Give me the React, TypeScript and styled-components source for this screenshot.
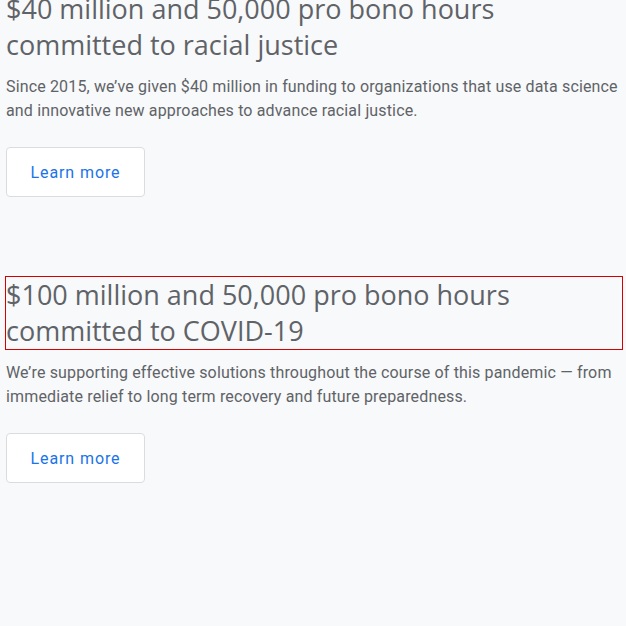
import React from 'react'
import styled, { createGlobalStyle } from 'styled-components'

const GlobalStyle = createGlobalStyle`
  html, body {
    margin: 0;
    padding: 0;
    background: #f8f9fa;
  }
  body {
    font-family: Roboto, "Liberation Sans", Arial, sans-serif;
    -webkit-font-smoothing: antialiased;
  }
`;

const Page = styled.main`
  margin-top: -9px;
  padding: 0 4px 0 6px;
`;

const Section = styled.section`
  padding-bottom: 80px;
`;

const Title = styled.h2<{ $focused?: boolean }>`
  margin: 0;
  font-family: "Open Sans", Roboto, sans-serif;
  font-weight: 400;
  font-size: 27px;
  line-height: 36px;
  color: #5f6368;
  outline: ${props => (props.$focused ? '1px solid #d50000' : 'none')};
`;

const Text = styled.p`
  margin: 12px 0 0;
  font-size: 16px;
  line-height: 24px;
  letter-spacing: 0.15px;
  color: #5f6368;
`;

const Button = styled.a`
  display: inline-flex;
  align-items: center;
  justify-content: center;
  box-sizing: border-box;
  margin-top: 24px;
  width: 139px;
  height: 50px;
  background: #fff;
  border: 1px solid #dadce0;
  border-radius: 4px;
  color: #1a73e8;
  font-size: 16px;
  font-weight: 400;
  letter-spacing: 0.9px;
  text-decoration: none;
  cursor: pointer;
`;

interface IItem {
  id: string,
  title: string,
  text: string,
}

const items: IItem[] = [
  {
    id: 'racial-justice',
    title: '$40 million and 50,000 pro bono hours committed to racial justice',
    text: 'Since 2015, we’ve given $40 million in funding to organizations that use data science and innovative new approaches to advance racial justice.',
  },
  {
    id: 'covid',
    title: '$100 million and 50,000 pro bono hours committed to COVID-19',
    text: 'We’re supporting effective solutions throughout the course of this pandemic — from immediate relief to long term recovery and future preparedness.',
  },
];

function App() {
  return (
    <>
      <GlobalStyle />
      <Page>
        {items.map((item, i) => (
          <Section key={item.id}>
            <Title $focused={i === 1}>{item.title}</Title>
            <Text>{item.text}</Text>
            <Button href="#">Learn more</Button>
          </Section>
        ))}
      </Page>
    </>
  )
}

export default App
